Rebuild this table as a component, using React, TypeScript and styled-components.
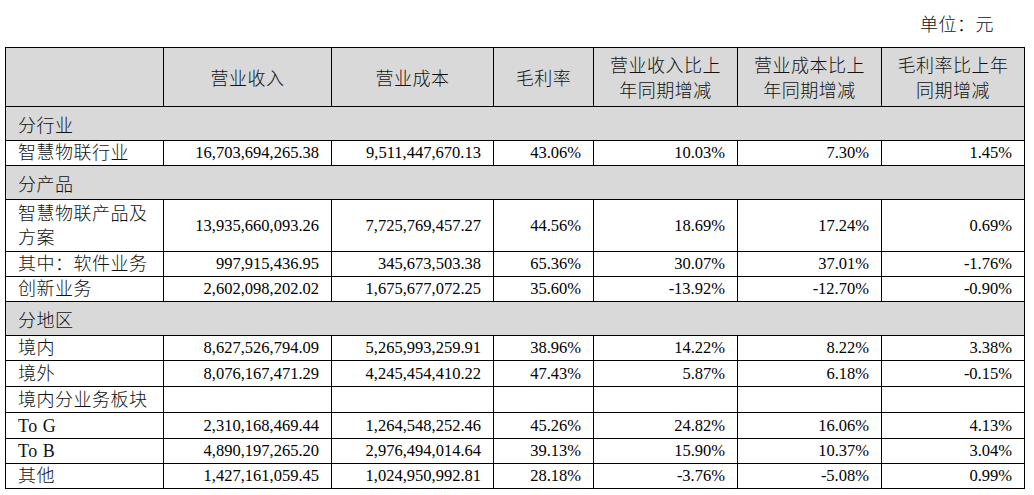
import React from "react";
import styled, { createGlobalStyle } from "styled-components";

const GlobalStyle = createGlobalStyle`
  html, body {
    margin: 0;
    padding: 0;
    background: #ffffff;
  }
  body {
    font-family: "Liberation Serif", "Noto Sans CJK SC", serif;
    color: #000;
  }
`;

const Page = styled.div`
  width: 1034px;
  padding-left: 5px;
  box-sizing: border-box;
`;

const UnitLine = styled.div`
  height: 47px;
  width: 1019px;
  display: flex;
  align-items: center;
  justify-content: flex-end;
  padding-right: 30px;
  padding-bottom: 2px;
  box-sizing: border-box;
  font-family: "Noto Sans CJK SC", sans-serif;
  font-weight: 300;
  font-size: 18px;
  letter-spacing: 0.5px;
  color: #111;
`;

const Table = styled.table`
  border-collapse: collapse;
  table-layout: fixed;
  width: 1019px;
`;

const Row = styled.tr<{ $h: number }>`
  height: ${(p) => p.$h}px;
`;

const baseCell = `
  border: 1px solid #000;
  box-sizing: border-box;
  padding: 0 12px;
  vertical-align: middle;
`;

const HeadCell = styled.th`
  ${baseCell}
  background: #d9d9d9;
  font-family: "Noto Sans CJK SC", sans-serif;
  font-weight: 300;
  font-size: 18px;
  letter-spacing: 0.5px;
  line-height: 25px;
  text-align: center;
  color: #111;
`;

const GroupCell = styled.td`
  ${baseCell}
  background: #d9d9d9;
  font-family: "Noto Sans CJK SC", sans-serif;
  font-weight: 300;
  font-size: 18px;
  letter-spacing: 0.5px;
  line-height: 22px;
  text-align: left;
  color: #111;
`;

const LabelCell = styled.td<{ $wrap?: boolean }>`
  ${baseCell}
  font-family: "Liberation Serif", "Noto Sans CJK SC", serif;
  font-weight: 300;
  font-size: 18px;
  letter-spacing: 0.5px;
  line-height: ${(p) => (p.$wrap ? "24px" : "20px")};
  text-align: left;
  color: #111;
  white-space: nowrap;
`;

const NumCell = styled.td`
  ${baseCell}
  font-family: "Liberation Serif", serif;
  font-size: 16.5px;
  line-height: 22px;
  text-align: right;
  color: #000;
  white-space: nowrap;
`;

type DataRow = {
  kind: "data";
  label: React.ReactNode;
  values: string[];
  h: number;
  wrap?: boolean;
};
type GroupRow = { kind: "group"; label: string; h: number };
type RowDef = DataRow | GroupRow;

const colWidths = [158, 168, 162, 100, 144, 144, 143];

const headers: React.ReactNode[] = [
  "",
  "营业收入",
  "营业成本",
  "毛利率",
  <>
    营业收入比上
    <br />
    年同期增减
  </>,
  <>
    营业成本比上
    <br />
    年同期增减
  </>,
  <>
    毛利率比上年
    <br />
    同期增减
  </>,
];

const rows: RowDef[] = [
  { kind: "group", label: "分行业", h: 34 },
  {
    kind: "data",
    label: "智慧物联行业",
    values: ["16,703,694,265.38", "9,511,447,670.13", "43.06%", "10.03%", "7.30%", "1.45%"],
    h: 25,
  },
  { kind: "group", label: "分产品", h: 34 },
  {
    kind: "data",
    label: (
      <>
        智慧物联产品及
        <br />
        方案
      </>
    ),
    values: ["13,935,660,093.26", "7,725,769,457.27", "44.56%", "18.69%", "17.24%", "0.69%"],
    h: 52,
    wrap: true,
  },
  {
    kind: "data",
    label: "其中：软件业务",
    values: ["997,915,436.95", "345,673,503.38", "65.36%", "30.07%", "37.01%", "-1.76%"],
    h: 25,
  },
  {
    kind: "data",
    label: "创新业务",
    values: ["2,602,098,202.02", "1,675,677,072.25", "35.60%", "-13.92%", "-12.70%", "-0.90%"],
    h: 25,
  },
  { kind: "group", label: "分地区", h: 34 },
  {
    kind: "data",
    label: "境内",
    values: ["8,627,526,794.09", "5,265,993,259.91", "38.96%", "14.22%", "8.22%", "3.38%"],
    h: 25,
  },
  {
    kind: "data",
    label: "境外",
    values: ["8,076,167,471.29", "4,245,454,410.22", "47.43%", "5.87%", "6.18%", "-0.15%"],
    h: 26,
  },
  {
    kind: "data",
    label: "境内分业务板块",
    values: ["", "", "", "", "", ""],
    h: 26,
  },
  {
    kind: "data",
    label: "To G",
    values: ["2,310,168,469.44", "1,264,548,252.46", "45.26%", "24.82%", "16.06%", "4.13%"],
    h: 26,
  },
  {
    kind: "data",
    label: "To B",
    values: ["4,890,197,265.20", "2,976,494,014.64", "39.13%", "15.90%", "10.37%", "3.04%"],
    h: 25,
  },
  {
    kind: "data",
    label: "其他",
    values: ["1,427,161,059.45", "1,024,950,992.81", "28.18%", "-3.76%", "-5.08%", "0.99%"],
    h: 25,
  },
];

export default function App() {
  return (
    <>
      <GlobalStyle />
      <Page>
        <UnitLine>单位：元</UnitLine>
        <Table>
          <colgroup>
            {colWidths.map((w, i) => (
              <col key={i} style={{ width: w }} />
            ))}
          </colgroup>
          <thead>
            <Row $h={59}>
              {headers.map((h, i) => (
                <HeadCell key={i}>{h}</HeadCell>
              ))}
            </Row>
          </thead>
          <tbody>
            {rows.map((r, i) =>
              r.kind === "group" ? (
                <Row key={i} $h={r.h}>
                  <GroupCell colSpan={7}>{r.label}</GroupCell>
                </Row>
              ) : (
                <Row key={i} $h={r.h}>
                  <LabelCell $wrap={r.wrap}>{r.label}</LabelCell>
                  {r.values.map((v, j) => (
                    <NumCell key={j}>{v}</NumCell>
                  ))}
                </Row>
              )
            )}
          </tbody>
        </Table>
      </Page>
    </>
  );
}
